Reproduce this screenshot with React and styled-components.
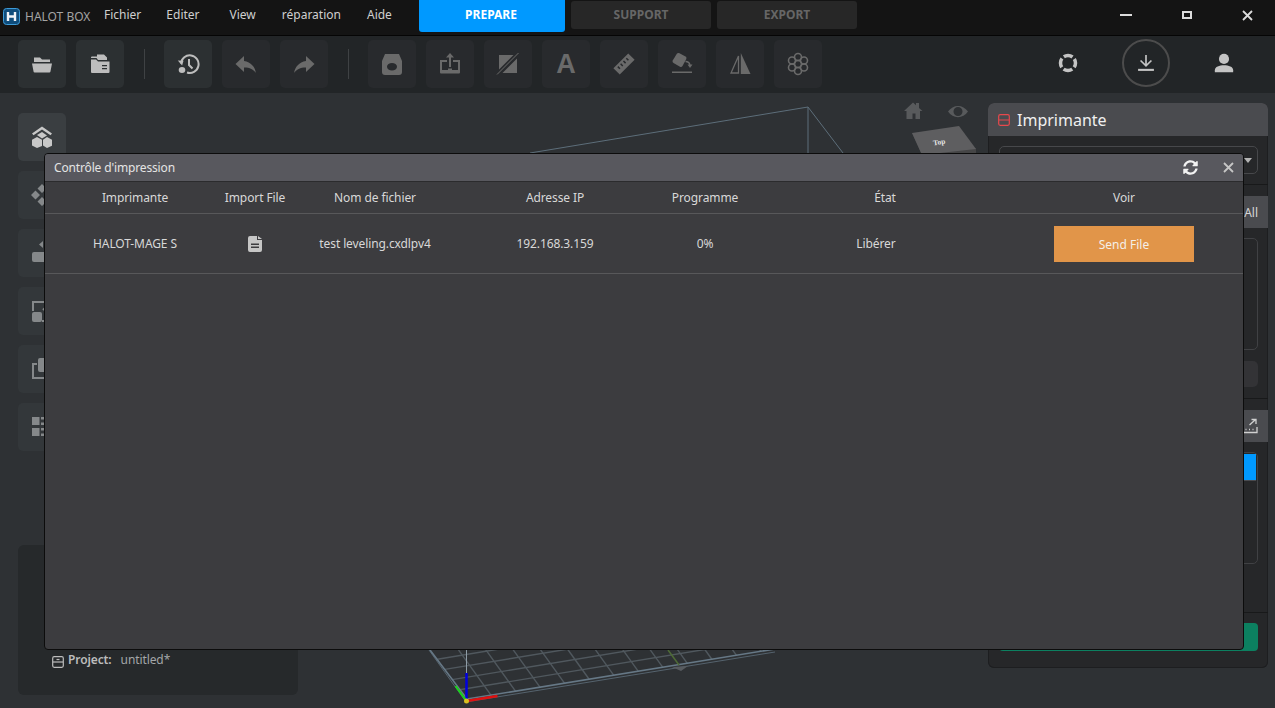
import React from "react";
import styled, { createGlobalStyle } from "styled-components";
import { FaSyncAlt } from "react-icons/fa";

const GlobalStyle = createGlobalStyle`
  html, body {
    margin: 0;
    height: 100%;
    background: #2e3134;
    overflow: hidden;
    font-family: "Noto Sans", "Liberation Sans", sans-serif;
  }
  #root { height: 100%; }
`;

const Page = styled.div`
  position: relative;
  width: 1275px;
  height: 708px;
  display: flex;
  flex-direction: column;
  overflow: hidden;
`;

/* title bar */
const TitleBar = styled.header`
  height: 35px;
  flex: none;
  display: flex;
  align-items: flex-start;
  background: #141414;
  border-bottom: 1px solid #050505;
`;

const Logo = styled.div`
  display: flex;
  align-items: center;
  gap: 5px;
  width: 104px;
  height: 32px;
  padding-left: 3px;
  box-sizing: border-box;
  font-size: 12px;
  color: #a4a4a4;
  white-space: nowrap;
`;

const Menu = styled.nav`
  display: flex;
  width: 315px;
  height: 29px;
  align-items: center;
  font-size: 12px;
  color: #cfcfcf;
`;

const MenuItem = styled.span`
  margin-right: ${(p) => p.$gap}px;
`;

const ModeTab = styled.div`
  display: flex;
  align-items: center;
  justify-content: center;
  box-sizing: border-box;
  width: ${(p) => (p.$active ? 146 : 140)}px;
  height: ${(p) => (p.$active ? 32 : 28)}px;
  margin: ${(p) => (p.$active ? "0 6px 0 0" : "1px 6px 0 0")};
  padding: ${(p) => (p.$active ? "0 2px 3px 0" : "0 0 1px 0")};
  border-radius: 0 0 3px 3px;
  background: ${(p) => (p.$active ? "#0099ff" : "#272727")};
  color: ${(p) => (p.$active ? "#ffffff" : "#666666")};
  font-size: 12px;
  font-weight: 700;
  ${(p) => !p.$active && "border-radius: 3px;"}
`;

const WindowButtons = styled.div`
  margin-left: auto;
  display: flex;
  height: 30px;
  align-items: center;
  padding-right: 22px;
  gap: 50px;
  color: #dcdcdc;
`;

/* toolbar */
const Toolbar = styled.div`
  height: 57px;
  flex: none;
  display: flex;
  align-items: center;
  padding: 4px 0 5px 18px;
  box-sizing: border-box;
  gap: 10px;
  background: #222527;
`;

const ToolButton = styled.button`
  width: 48px;
  height: 48px;
  flex: none;
  padding: 0;
  display: flex;
  align-items: center;
  justify-content: center;
  border: 0;
  border-radius: 5px;
  background: ${(p) => (p.$on ? "#2c3032" : "#282a2d")};
  color: ${(p) => (p.$on ? "#bdbdbd" : "#6a6a6a")};
`;

const ToolLetter = styled.span`
  font-family: "Liberation Sans", sans-serif;
  font-size: 27px;
  font-weight: 700;
  line-height: 1;
`;

const ToolDivider = styled.div`
  width: 1px;
  height: 30px;
  flex: none;
  margin: 0 9px 0 10px;
  background: #3f4244;
`;

const ToolRight = styled.div`
  margin-left: auto;
  display: flex;
  align-items: center;
  padding: 0 40px 2px 0;
  color: #c4c4c4;
`;

const RoundButton = styled.div`
  width: 48px;
  height: 48px;
  box-sizing: border-box;
  margin: 0 43px 0 44px;
  display: flex;
  align-items: center;
  justify-content: center;
  border: 2px solid #4c4c4c;
  border-radius: 50%;
`;

/* work area */
const Workspace = styled.main`
  position: relative;
  flex: 1;
  display: flex;
  justify-content: space-between;
  background: #2e3134;
`;

const Scene = styled.svg`
  position: absolute;
  left: 0;
  top: 0;
`;

const Sidebar = styled.aside`
  position: relative;
  width: 280px;
  margin: 20px 0 13px 18px;
  display: flex;
  flex-direction: column;
  gap: 10px;
`;

const SideButton = styled(ToolButton)`
  background: ${(p) => (p.$on ? "#3a3e41" : "#33373a")};
  color: ${(p) => (p.$on ? "#c8c8c8" : "#85888a")};
`;

const ProjectCard = styled.section`
  margin-top: auto;
  height: 150px;
  display: flex;
  align-items: flex-end;
  gap: 4px;
  box-sizing: border-box;
  padding: 0 0 27px 34px;
  border-radius: 6px;
  background: #26292b;
  font-size: 12px;
  letter-spacing: -0.1px;
  color: #a3a6a8;
`;

const ProjectLabel = styled.strong`
  color: #bcbcbc;
  font-weight: 600;
  margin-right: 6px;
`;

const SidePanel = styled.aside`
  position: relative;
  width: 280px;
  height: 565px;
  margin: 10px 7px 0 0;
  display: flex;
  flex-direction: column;
  border-radius: 6px;
  overflow: hidden;
  background: #262729;
  box-shadow: inset 0 0 0 1px #1d1e20;
`;

const PanelHeader = styled.div`
  height: 33px;
  flex: none;
  display: flex;
  align-items: center;
  gap: 7px;
  padding-left: 10px;
  background: #4a4b4f;
  color: #f0f0f0;
  font-size: 16px;
`;

const PanelSelect = styled.div`
  height: 26px;
  margin: 10px 10px 0 11px;
  flex: none;
  border: 1px solid #47484b;
  border-radius: 5px;
  display: flex;
  align-items: center;
  justify-content: flex-end;
  padding-right: 5px;
`;

const Caret = styled.div`
  width: 0;
  height: 0;
  border-left: 4px solid transparent;
  border-right: 4px solid transparent;
  border-top: 5px solid #b4b4b4;
`;

const PanelRule = styled.div`
  height: 1px;
  flex: none;
  margin-top: ${(p) => p.$top}px;
  background: #18191a;
`;

const PanelTab = styled.div`
  height: 32px;
  flex: none;
  margin-top: 11px;
  display: flex;
  align-items: center;
  justify-content: flex-end;
  padding-right: 10px;
  background: #4a4b4f;
  color: #d6d6d6;
  font-size: 12px;
`;

const PanelBox = styled.div`
  height: 112px;
  box-sizing: border-box;
  flex: none;
  margin: 10px 10px 0 11px;
  border: 1px solid #404144;
  border-radius: 5px;
  padding: 1px;
`;

const ActiveRow = styled.div`
  height: 26px;
  background: #0099ff;
  border-bottom: 1px solid #4a4b4f;
`;

const GreyButton = styled.div`
  height: 26px;
  flex: none;
  margin: 11px 10px 0 11px;
  border-radius: 5px;
  background: #333336;
`;

const GreenButton = styled.div`
  height: 28px;
  flex: none;
  margin: 10px 10px 0 11px;
  border-radius: 4px;
  background: #0c8060;
`;

/* print control dialog */
const Dialog = styled.section`
  position: absolute;
  left: 44px;
  top: 153px;
  width: 1198px;
  height: 495px;
  display: flex;
  flex-direction: column;
  border: 1px solid #0c0c0c;
  border-radius: 4px;
  overflow: hidden;
  background: #3c3c3f;
  color: #d8d8d8;
  font-size: 12px;
  letter-spacing: -0.1px;
`;

const DialogTitle = styled.div`
  height: 28px;
  flex: none;
  box-sizing: border-box;
  display: flex;
  align-items: center;
  padding: 0 9px 1px 9px;
  background: #58585e;
  border-bottom: 1px solid #2b2b2d;
  color: #e4e4e4;
  letter-spacing: -0.15px;
`;

const DialogActions = styled.div`
  margin-left: auto;
  display: flex;
  align-items: center;
  gap: 25px;
  color: #f2f2f2;
`;

const CloseWrap = styled.span`
  display: flex;
  color: #c6c6c6;
`;

const Row = styled.div`
  display: grid;
  grid-template-columns: 180px 60px 180px 180px 120px 240px 1fr;
  align-items: center;
  justify-items: center;
  flex: none;
  height: ${(p) => p.$height}px;
  border-bottom: 1px solid #58585a;
  white-space: nowrap;
`;

const Cell = styled.span`
  margin-right: ${(p) => p.$shift || 0}px;
`;

const FileIcon = styled.span`
  display: flex;
  color: #c6c6c6;
`;

const SendButton = styled.button`
  width: 140px;
  height: 36px;
  margin-top: 1px;
  border: 0;
  padding: 0;
  background: #e19549;
  color: #f4efe8;
  font: inherit;
`;

const Glyph = ({ size = 24, w, h, children, box = "0 0 24 24" }) => (
  <svg width={w || size} height={h || size} viewBox={box} fill="currentColor" style={{ display: "block" }}>
    {children}
  </svg>
);

const icons = {
  folderOpen: (
    <Glyph>
      <path d="M4 5.500h6l2 2h8v2.500H4z" />
      <path d="M2 11.500h20l-1.600 8.200a1 1 0 0 1-1 .8H4.600a1 1 0 0 1-1-.8z" />
    </Glyph>
  ),
  folderFile: (
    <Glyph>
      <path d="M3 5.500a1 1 0 0 1 1-1h5v-2h7l3 3V8H10L8.500 6H3z" />
      <path fillRule="evenodd" d="M3 7.500h5l2 2h11.500v10.500a1 1 0 0 1-1 1H4a1 1 0 0 1-1-1zM14 13v1.300h5V13zm0 3v1.300h5V16z" />
    </Glyph>
  ),
  history: (
    <Glyph>
      <path d="M5 11.500A8.800 8.800 0 1 1 11 20.500" fill="none" stroke="currentColor" strokeWidth="2" />
      <path d="M1.800 8.500l5.700.2-1.400 4.800z" />
      <path d="M13 7v6l3.500 3.500" fill="none" stroke="currentColor" strokeWidth="2" />
      <ellipse cx="6" cy="18" rx="3.300" ry="3" />
    </Glyph>
  ),
  undo: (
    <Glyph>
      <path d="M10 4v5c7 1 11 6 12 12-2.500-3.500-6-5.500-12-5.500V20L1.500 12z" />
    </Glyph>
  ),
  redo: (
    <Glyph>
      <path d="M14 4v5C7 10 3 15 2 21c2.500-3.500 6-5.500 12-5.500V20l8.500-8z" />
    </Glyph>
  ),
  box: (
    <Glyph>
      <path fillRule="evenodd" d="M5 2h14l3 7v11a3 3 0 0 1-3 3H5a3 3 0 0 1-3-3V9zm7 9a5 3.800 0 1 0 0 7.600 5 3.800 0 0 0 0-7.600z" />
    </Glyph>
  ),
  upload: (
    <Glyph>
      <path d="M12 1l4 4.500h-3v9.500h-2V5.500H8z" />
      <path d="M9 8H2v12.500a1 1 0 0 0 1 1h18a1 1 0 0 0 1-1V8h-7v2h5v8h-6v-1.500H10V18H4v-8h5z" />
    </Glyph>
  ),
  slash: (
    <Glyph>
      <path d="M3 3h14.500L3 17.500z" />
      <path d="M21 6.500V21H6.500z" />
      <path d="M1 22.500L22.500 1" fill="none" stroke="currentColor" strokeWidth="1" />
    </Glyph>
  ),
  ruler: (
    <Glyph>
      <g transform="rotate(-45 12 12)">
        <path fillRule="evenodd" d="M1.500 7.500h21v9h-21zM5 9.500v3h1.500v-3zm4 0v3h1.500v-3zm4 0v3h1.500v-3zm4 0v3h1.500v-3z" />
      </g>
    </Glyph>
  ),
  eraser: (
    <Glyph>
      <path d="M7 1.500a2 2 0 0 1 2-.5l6.500 3.500a2 2 0 0 1 .8 2.500L12.500 14a2 2 0 0 1-2.500.8L3.500 11a2 2 0 0 1-.8-2.500z" />
      <path d="M2 19.500h20V21H2z" />
      <path d="M15.500 9.500c2.500 0 4 1.200 4.500 3.500" fill="none" stroke="currentColor" strokeWidth="1.300" />
      <path d="M17.500 12.500h5L20 16z" />
    </Glyph>
  ),
  mirror: (
    <Glyph>
      <path d="M10.500 4v17H3z" fill="none" stroke="currentColor" strokeWidth="1.300" />
      <path d="M12.800 1l9.700 21h-9.700z" />
    </Glyph>
  ),
  flower: (
    <Glyph>
      <g fill="none" stroke="currentColor" strokeWidth="1.600">
        <circle cx="12" cy="12" r="3.500" />
        <circle cx="12" cy="5" r="3.500" />
        <circle cx="12" cy="19" r="3.500" />
        <circle cx="6" cy="8.500" r="3.500" />
        <circle cx="18" cy="8.500" r="3.500" />
        <circle cx="6" cy="15.500" r="3.500" />
        <circle cx="18" cy="15.500" r="3.500" />
      </g>
    </Glyph>
  ),
  ring: (
    <Glyph size={20}>
      <circle cx="12" cy="12" r="9" fill="none" stroke="currentColor" strokeWidth="4.200" strokeDasharray="11 3.140" strokeDashoffset="5.500" />
    </Glyph>
  ),
  download: (
    <Glyph size={20}>
      <path d="M12 2.500v12M5.500 9l6.500 6.500L18.500 9" fill="none" stroke="currentColor" strokeWidth="2" />
      <path d="M2.500 19h19v2.500h-19z" />
    </Glyph>
  ),
  user: (
    <Glyph size={22}>
      <circle cx="12" cy="7.500" r="5.500" />
      <path d="M2 22v-2c0-4 5-5.500 10-5.500s10 1.500 10 5.500v2z" />
    </Glyph>
  ),
  layers: (
    <Glyph>
      <path d="M12 1.500l10 7-1.500 1.800L12 4.500 3.500 10.300 2 8.500z" />
      <path d="M12 7l5 3.500-5 3-5-3.500z" />
      <path d="M7 13l5 2.800v6.200l-5 2-5-2.500v-5.700zM17 13l5 2.800v6l-5 2.200-4-2.500v-5.700z" transform="translate(0 -1)" />
    </Glyph>
  ),
  move: (
    <Glyph>
      <path d="M12 1l4.500 4.500L12 10 7.500 5.500zM5.500 7.500L10 12l-4.500 4.500L1 12zM18.500 7.500L23 12l-4.500 4.500L14 12zM12 14l4.500 4.500L12 23l-4.500-4.500z" />
    </Glyph>
  ),
  drop: (
    <Glyph>
      <path d="M9 3.500l4-3.500v7z" />
      <path d="M2 13a2 2 0 0 1 2-2h20v10H4a2 2 0 0 1-2-2z" />
    </Glyph>
  ),
  scale: (
    <Glyph>
      <path d="M3 12V3h19v7M12 22h10v-4" fill="none" stroke="currentColor" strokeWidth="2" />
      <rect x="2" y="13" width="10" height="10" rx="2" />
      <path d="M13 11l7-7" stroke="currentColor" strokeWidth="2" />
    </Glyph>
  ),
  copy: (
    <Glyph>
      <path d="M7 7H3v14h14v-4" fill="none" stroke="currentColor" strokeWidth="2" />
      <rect x="8" y="1" width="15" height="14" rx="2" />
    </Glyph>
  ),
  grid: (
    <Glyph>
      <rect x="2" y="2" width="7.500" height="8" />
      <rect x="2" y="13" width="7.500" height="8" />
      <rect x="11" y="2" width="8" height="2.500" />
      <rect x="11" y="7.500" width="8" height="2.500" />
      <rect x="11" y="13" width="8" height="2.500" />
      <rect x="11" y="18.500" width="8" height="2.500" />
    </Glyph>
  ),
};

const SaveMark = ({ color, size = 12, tab }) => (
  <svg width={size} height={size} viewBox="0 0 12 12" fill="none" stroke={color} strokeWidth="1.200" style={{ display: "block", flex: "none" }}>
    <rect x="0.700" y="0.700" width="10.600" height="10.600" rx="1.500" />
    <path d="M1 6h10" />
    {tab && <path d="M4.500 3.500h3" />}
  </svg>
);

const CloseMark = ({ size = 11, width = 1.800 }) => (
  <svg width={size} height={size} viewBox="0 0 11 11" stroke="currentColor" strokeWidth={width} style={{ display: "block" }}>
    <path d="M1 1l9 9M10 1l-9 9" />
  </svg>
);

const gridLines = () => {
  const lines = [];
  for (let i = 1; i < 13; i++) {
    const x = 467 + i * 24.500;
    const y = 700 - i * 4.050;
    lines.push(<path key={"a" + i} d={`M${x} ${y}L${x - 33} ${y - 46}`} />);
  }
  for (let i = 1; i < 5; i++) {
    const x = 467 - i * 7.400;
    const y = 700 - i * 10.200;
    lines.push(<path key={"b" + i} d={`M${x} ${y}L${x + 310} ${y - 51}`} />);
  }
  return lines;
};

const SceneArt = () => (
  <Scene width="1275" height="615" viewBox="0 93 1275 615">
    <g stroke="#5d6e7a" strokeWidth="1" fill="none">
      <path d="M530 153L808 107L843 153M808 107V153" />
    </g>
    <g stroke="#50585e" strokeWidth="1.400">{gridLines()}</g>
    <g stroke="#667886" strokeWidth="1.600" fill="none">
      <path d="M430 650L467 699L775 649" />
      <path d="M429 650L466 702L775 652" strokeWidth="0.700" />
    </g>
    <path d="M668 650l11 15" stroke="#4f6b37" strokeWidth="1.500" />
    <path d="M672 667l16-1-7 5z" fill="#585c60" />
    <path d="M466.500 650v25" stroke="#8e9ca6" />
    <path d="M466.500 701v-28" stroke="#0000e0" strokeWidth="2.500" />
    <path d="M466.500 701l-11-15" stroke="#18d818" strokeWidth="2" />
    <path d="M466.500 701l31-5" stroke="#e01010" strokeWidth="2.500" />
    <circle cx="466.500" cy="701" r="2.500" fill="#d8c020" />
    <g fill="#585a5c">
      <path d="M904 111l9-8.500 3 2.800V103h3v5l3.500 3h-2.500v8h-4.500v-5.500h-3V119H906.500v-8z" />
      <path fillRule="evenodd" d="M948 111.500c5-7.500 15-7.500 20 0-5 7.500-15 7.500-20 0zm10-4.500a4.500 4.500 0 1 0 0 9 4.500 4.500 0 0 0 0-9z" />
    </g>
    <path d="M912 133l10 22h54v-6.500z" fill="#454546" />
    <path d="M912 133l47-7 17 23-54 6z" fill="#5e5e60" />
    <text x="933" y="144" transform="rotate(-9 943 142)" fontFamily="Liberation Serif, serif" fontSize="7.500" fontWeight="700" fill="#e6e6e6">Top</text>
  </Scene>
);

const topLeft = ["folderOpen", "folderFile"];
const topMid = [
  { name: "history", on: true },
  { name: "undo" },
  { name: "redo" },
];
const topRight = ["box", "upload", "slash", "letter", "ruler", "eraser", "mirror", "flower"];
const sideTools = ["layers", "move", "drop", "scale", "copy", "grid"];

const App = () => (
  <>
    <GlobalStyle />
    <Page>
      <TitleBar>
        <Logo>
          <svg width="17" height="17" viewBox="0 0 17 17" style={{ display: "block", flex: "none" }}>
            <rect x="0.500" y="0.500" width="16" height="16" rx="3" fill="#0f4d7c" stroke="#3d9bd8" />
            <path d="M5 4v9M12 4v9M5 8.500h7" stroke="#f0f4f8" strokeWidth="2.400" fill="none" />
          </svg>
          HALOT BOX
        </Logo>
        <Menu>
          <MenuItem $gap={25}>Fichier</MenuItem>
          <MenuItem $gap={30}>Editer</MenuItem>
          <MenuItem $gap={26}>View</MenuItem>
          <MenuItem $gap={26}>réparation</MenuItem>
          <MenuItem $gap={0}>Aide</MenuItem>
        </Menu>
        <ModeTab $active>PREPARE</ModeTab>
        <ModeTab>SUPPORT</ModeTab>
        <ModeTab>EXPORT</ModeTab>
        <WindowButtons>
          <svg width="12" height="2" style={{ display: "block" }}><rect width="12" height="2" fill="currentColor" /></svg>
          <svg width="10" height="8" style={{ display: "block" }}><rect x="1" y="1" width="8" height="6" fill="none" stroke="currentColor" strokeWidth="2" /></svg>
          <CloseMark />
        </WindowButtons>
      </TitleBar>

      <Toolbar>
        {topLeft.map((name) => (
          <ToolButton key={name} $on>{icons[name]}</ToolButton>
        ))}
        <ToolDivider />
        {topMid.map((tool) => (
          <ToolButton key={tool.name} $on={tool.on}>{icons[tool.name]}</ToolButton>
        ))}
        <ToolDivider />
        {topRight.map((name) => (
          <ToolButton key={name}>
            {name === "letter" ? <ToolLetter>A</ToolLetter> : icons[name]}
          </ToolButton>
        ))}
        <ToolRight>
          {icons.ring}
          <RoundButton>{icons.download}</RoundButton>
          {icons.user}
        </ToolRight>
      </Toolbar>

      <Workspace>
        <SceneArt />
        <Sidebar>
          {sideTools.map((name, i) => (
            <SideButton key={name} $on={i === 0}>{icons[name]}</SideButton>
          ))}
          <ProjectCard>
            <SaveMark color="#bcbcbc" tab />
            <span><ProjectLabel>Project:</ProjectLabel> untitled*</span>
          </ProjectCard>
        </Sidebar>

        <SidePanel>
          <PanelHeader>
            <SaveMark color="#e8484c" />
            Imprimante
          </PanelHeader>
          <PanelSelect><Caret /></PanelSelect>
          <PanelRule $top={10} />
          <PanelTab>All</PanelTab>
          <PanelBox />
          <GreyButton />
          <PanelRule $top={11} />
          <PanelTab>
            <svg width="16" height="16" viewBox="0 0 16 16" fill="none" stroke="#d0d0d0" strokeWidth="1.300" style={{ display: "block" }}>
              <path d="M1 7v7.500h14V9" />
              <path d="M3.500 11.500h1M7 11.500h1M10.500 11.500h1" />
              <path d="M7.500 7L13 2M9.500 1.500H14V6" />
            </svg>
          </PanelTab>
          <PanelBox><ActiveRow /></PanelBox>
          <PanelRule $top={48} />
          <GreenButton />
        </SidePanel>
      </Workspace>

      <Dialog>
        <DialogTitle>
          Contrôle d'impression
          <DialogActions>
            <FaSyncAlt size={15} />
            <CloseWrap><CloseMark /></CloseWrap>
          </DialogActions>
        </DialogTitle>
        <Row $height={31}>
          <Cell>Imprimante</Cell>
          <Cell>Import File</Cell>
          <Cell>Nom de fichier</Cell>
          <Cell>Adresse IP</Cell>
          <Cell>Programme</Cell>
          <Cell>État</Cell>
          <Cell>Voir</Cell>
        </Row>
        <Row $height={59}>
          <Cell>HALOT-MAGE S</Cell>
          <FileIcon>
            <svg width="14" height="16" viewBox="0 0 14 16" fill="currentColor" style={{ display: "block" }}>
              <path fillRule="evenodd" d="M2 0h7v4h5v10a2 2 0 0 1-2 2H2a2 2 0 0 1-2-2V2a2 2 0 0 1 2-2zm1 7.500V9h8V7.500zm0 3V12h8v-1.500z" />
              <path d="M10 0l4 3h-4z" />
            </svg>
          </FileIcon>
          <Cell>test leveling.cxdlpv4</Cell>
          <Cell>192.168.3.159</Cell>
          <Cell>0%</Cell>
          <Cell $shift={18}>Libérer</Cell>
          <SendButton>Send File</SendButton>
        </Row>
      </Dialog>
    </Page>
  </>
);

export default App;
